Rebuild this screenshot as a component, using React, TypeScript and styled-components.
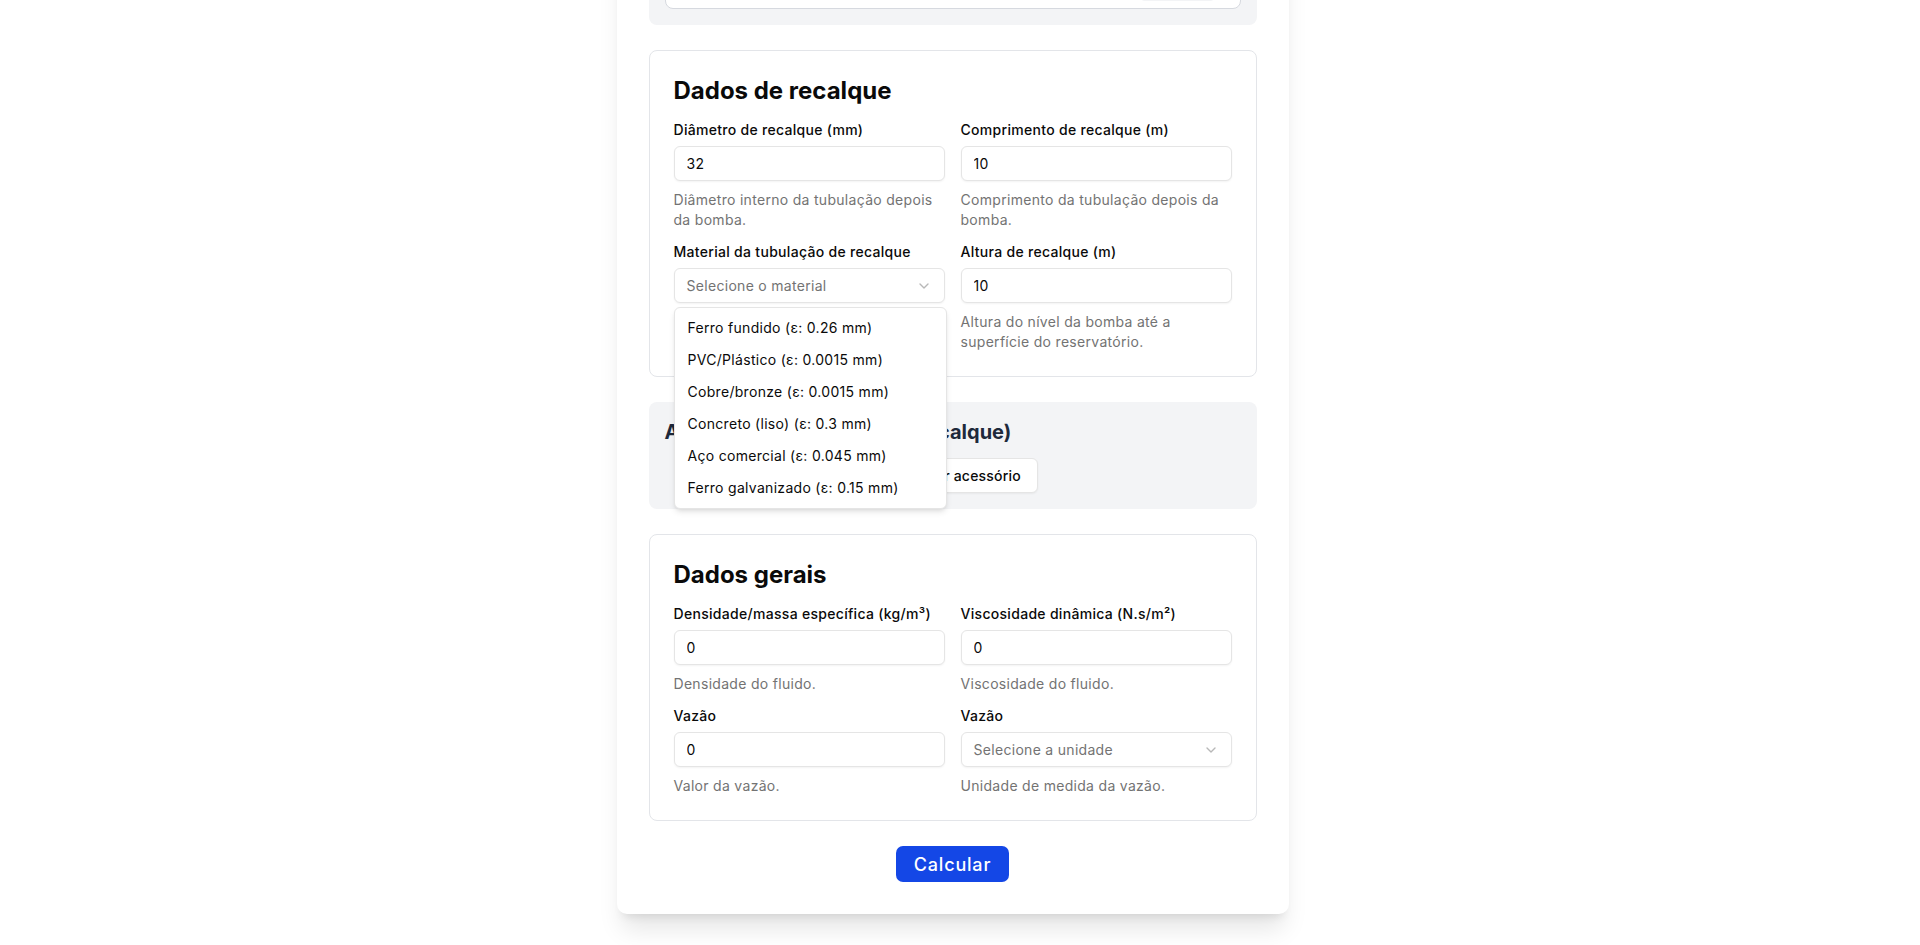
import styled, { createGlobalStyle } from 'styled-components'
import { ChevronDown } from 'lucide-react'

type FieldDef = {
  label: string
  value?: string
  placeholder?: string
  select?: boolean
  open?: boolean
  hint: string
}

const materials = [
  'Ferro fundido (ε: 0.26 mm)',
  'PVC/Plástico (ε: 0.0015 mm)',
  'Cobre/bronze (ε: 0.0015 mm)',
  'Concreto (liso) (ε: 0.3 mm)',
  'Aço comercial (ε: 0.045 mm)',
  'Ferro galvanizado (ε: 0.15 mm)',
]

const recalqueFields: FieldDef[] = [
  {
    label: 'Diâmetro de recalque (mm)',
    value: '32',
    hint: 'Diâmetro interno da tubulação depois da bomba.',
  },
  {
    label: 'Comprimento de recalque (m)',
    value: '10',
    hint: 'Comprimento da tubulação depois da bomba.',
  },
  {
    label: 'Material da tubulação de recalque',
    placeholder: 'Selecione o material',
    select: true,
    open: true,
    hint: 'Rugosidade do material da tubulação.',
  },
  {
    label: 'Altura de recalque (m)',
    value: '10',
    hint: 'Altura do nível da bomba até a superfície do reservatório.',
  },
]

const geraisFields: FieldDef[] = [
  {
    label: 'Densidade/massa específica (kg/m³)',
    value: '0',
    hint: 'Densidade do fluido.',
  },
  {
    label: 'Viscosidade dinâmica (N.s/m²)',
    value: '0',
    hint: 'Viscosidade do fluido.',
  },
  { label: 'Vazão', value: '0', hint: 'Valor da vazão.' },
  {
    label: 'Vazão',
    placeholder: 'Selecione a unidade',
    select: true,
    hint: 'Unidade de medida da vazão.',
  },
]

function FormField({ field }: { field: FieldDef }) {
  return (
    <Field>
      <Label>{field.label}</Label>
      {field.select ? (
        <SelectWrap>
          <SelectTrigger>
            <Placeholder>{field.placeholder}</Placeholder>
            <ChevronDown size={16} strokeWidth={2} color="#737373" opacity={0.5} />
          </SelectTrigger>
          {field.open && (
            <Dropdown>
              {materials.map((m) => (
                <Option key={m}>{m}</Option>
              ))}
            </Dropdown>
          )}
        </SelectWrap>
      ) : (
        <TextInput defaultValue={field.value} />
      )}
      <Hint>{field.hint}</Hint>
    </Field>
  )
}

export default function App() {
  return (
    <>
      <GlobalStyle />
      <Page>
        <Panel>
          <GraySection>
            <PrevEntry>
              <GhostButton />
            </PrevEntry>
          </GraySection>

          <Card>
            <CardTitle>Dados de recalque</CardTitle>
            <FieldGrid>
              {recalqueFields.map((f) => (
                <FormField key={f.label} field={f} />
              ))}
            </FieldGrid>
          </Card>

          <GraySection>
            <SectionTitle>Acessórios (tubulação de recalque)</SectionTitle>
            <ButtonRow>
              <OutlineButton>Adicionar acessório</OutlineButton>
            </ButtonRow>
          </GraySection>

          <Card>
            <CardTitle>Dados gerais</CardTitle>
            <FieldGrid>
              {geraisFields.map((f, i) => (
                <FormField key={i} field={f} />
              ))}
            </FieldGrid>
          </Card>

          <Actions>
            <PrimaryButton>Calcular</PrimaryButton>
          </Actions>
        </Panel>
      </Page>
    </>
  )
}

const GlobalStyle = createGlobalStyle`
  html, body {
    margin: 0;
    padding: 0;
    background: #ffffff;
    overflow: hidden;
  }
  body {
    font-family: Inter, 'Noto Sans', sans-serif;
    color: #0a0a0a;
  }
  * {
    box-sizing: border-box;
  }
`

const Page = styled.div`
  display: flex;
  flex-direction: column;
  align-items: center;
  margin-top: -99px;
  padding: 0 15px 48px 0;
`

const Panel = styled.div`
  width: 672px;
  background: #ffffff;
  border-radius: 10px;
  padding: 32px;
  display: flex;
  flex-direction: column;
  gap: 25px;
  box-shadow: 0 20px 25px -5px rgba(0, 0, 0, 0.1),
    0 8px 10px -6px rgba(0, 0, 0, 0.1);
`

const GraySection = styled.section`
  background: #f3f4f6;
  border-radius: 8px;
  padding: 16px;
`

const PrevEntry = styled.div`
  height: 60px;
  background: #ffffff;
  border: 1px solid #d6d9df;
  border-radius: 8px;
  display: flex;
  justify-content: flex-end;
  align-items: flex-end;
  padding: 0 24px 7px 0;
`

const GhostButton = styled.div`
  width: 77px;
  height: 30px;
  border-radius: 6px;
  background: #f3f4f6;
`

const Card = styled.section`
  border: 1px solid #e3e5e9;
  border-radius: 8px;
  padding: 24px;
`

const CardTitle = styled.h2`
  margin: 0 0 13px;
  font-size: 24px;
  line-height: 32px;
  font-weight: 700;
  color: #0a0a0a;
`

const FieldGrid = styled.div`
  display: grid;
  grid-template-columns: 1fr 1fr;
  column-gap: 16px;
  row-gap: 12px;
`

const Field = styled.div`
  display: flex;
  flex-direction: column;
`

const Label = styled.label`
  font-size: 14px;
  line-height: 20px;
  font-weight: 500;
  letter-spacing: 0.3px;
  color: #0a0a0a;
  margin-bottom: 6px;
`

const TextInput = styled.input`
  height: 35px;
  width: 100%;
  border: 1px solid #e5e5e5;
  border-radius: 6px;
  padding: 0 12px;
  font-family: Inter, 'Noto Sans', sans-serif;
  font-size: 14px;
  letter-spacing: 0.3px;
  color: #0a0a0a;
  background: #ffffff;
  box-shadow: 0 1px 2px rgba(0, 0, 0, 0.05);
  outline: none;
`

const SelectWrap = styled.div`
  position: relative;
`

const SelectTrigger = styled.div`
  height: 35px;
  border: 1px solid #e5e5e5;
  border-radius: 6px;
  padding: 0 12px;
  display: flex;
  align-items: center;
  justify-content: space-between;
  background: #ffffff;
  box-shadow: 0 1px 2px rgba(0, 0, 0, 0.05);
`

const Placeholder = styled.span`
  font-size: 14px;
  letter-spacing: 0.3px;
  color: #737373;
`

const Dropdown = styled.div`
  position: absolute;
  top: calc(100% + 4px);
  left: 0;
  width: calc(100% + 2px);
  z-index: 50;
  background: #ffffff;
  border: 1px solid #e5e5e5;
  border-radius: 6px;
  padding: 4px;
  box-shadow: 0 4px 6px -1px rgba(0, 0, 0, 0.1),
    0 2px 4px -2px rgba(0, 0, 0, 0.1);
`

const Option = styled.div`
  padding: 6px 8px 6px 9px;
  font-size: 14px;
  line-height: 20px;
  letter-spacing: 0.3px;
  color: #0a0a0a;
  border-radius: 4px;
`

const Hint = styled.p`
  margin: 9px 0 0;
  font-size: 14px;
  line-height: 20px;
  letter-spacing: 0.3px;
  color: #737373;
`

const SectionTitle = styled.h3`
  margin: 0;
  font-size: 20px;
  line-height: 28px;
  font-weight: 700;
  color: #1e293b;
`

const ButtonRow = styled.div`
  display: flex;
  justify-content: center;
  margin-top: 12px;
`

const OutlineButton = styled.button`
  height: 35px;
  padding: 0 16px;
  border: 1px solid #e5e5e5;
  border-radius: 6px;
  background: #ffffff;
  font-family: Inter, 'Noto Sans', sans-serif;
  font-size: 14px;
  font-weight: 500;
  letter-spacing: 0.2px;
  color: #0a0a0a;
  box-shadow: 0 1px 2px rgba(0, 0, 0, 0.05);
`

const Actions = styled.div`
  display: flex;
  justify-content: center;
`

const PrimaryButton = styled.button`
  height: 36px;
  min-width: 113px;
  padding: 0 16px;
  border: none;
  border-radius: 7px;
  background: #1447e6;
  color: #ffffff;
  font-family: Inter, 'Noto Sans', sans-serif;
  font-size: 18px;
  font-weight: 500;
  letter-spacing: 0.8px;
`
